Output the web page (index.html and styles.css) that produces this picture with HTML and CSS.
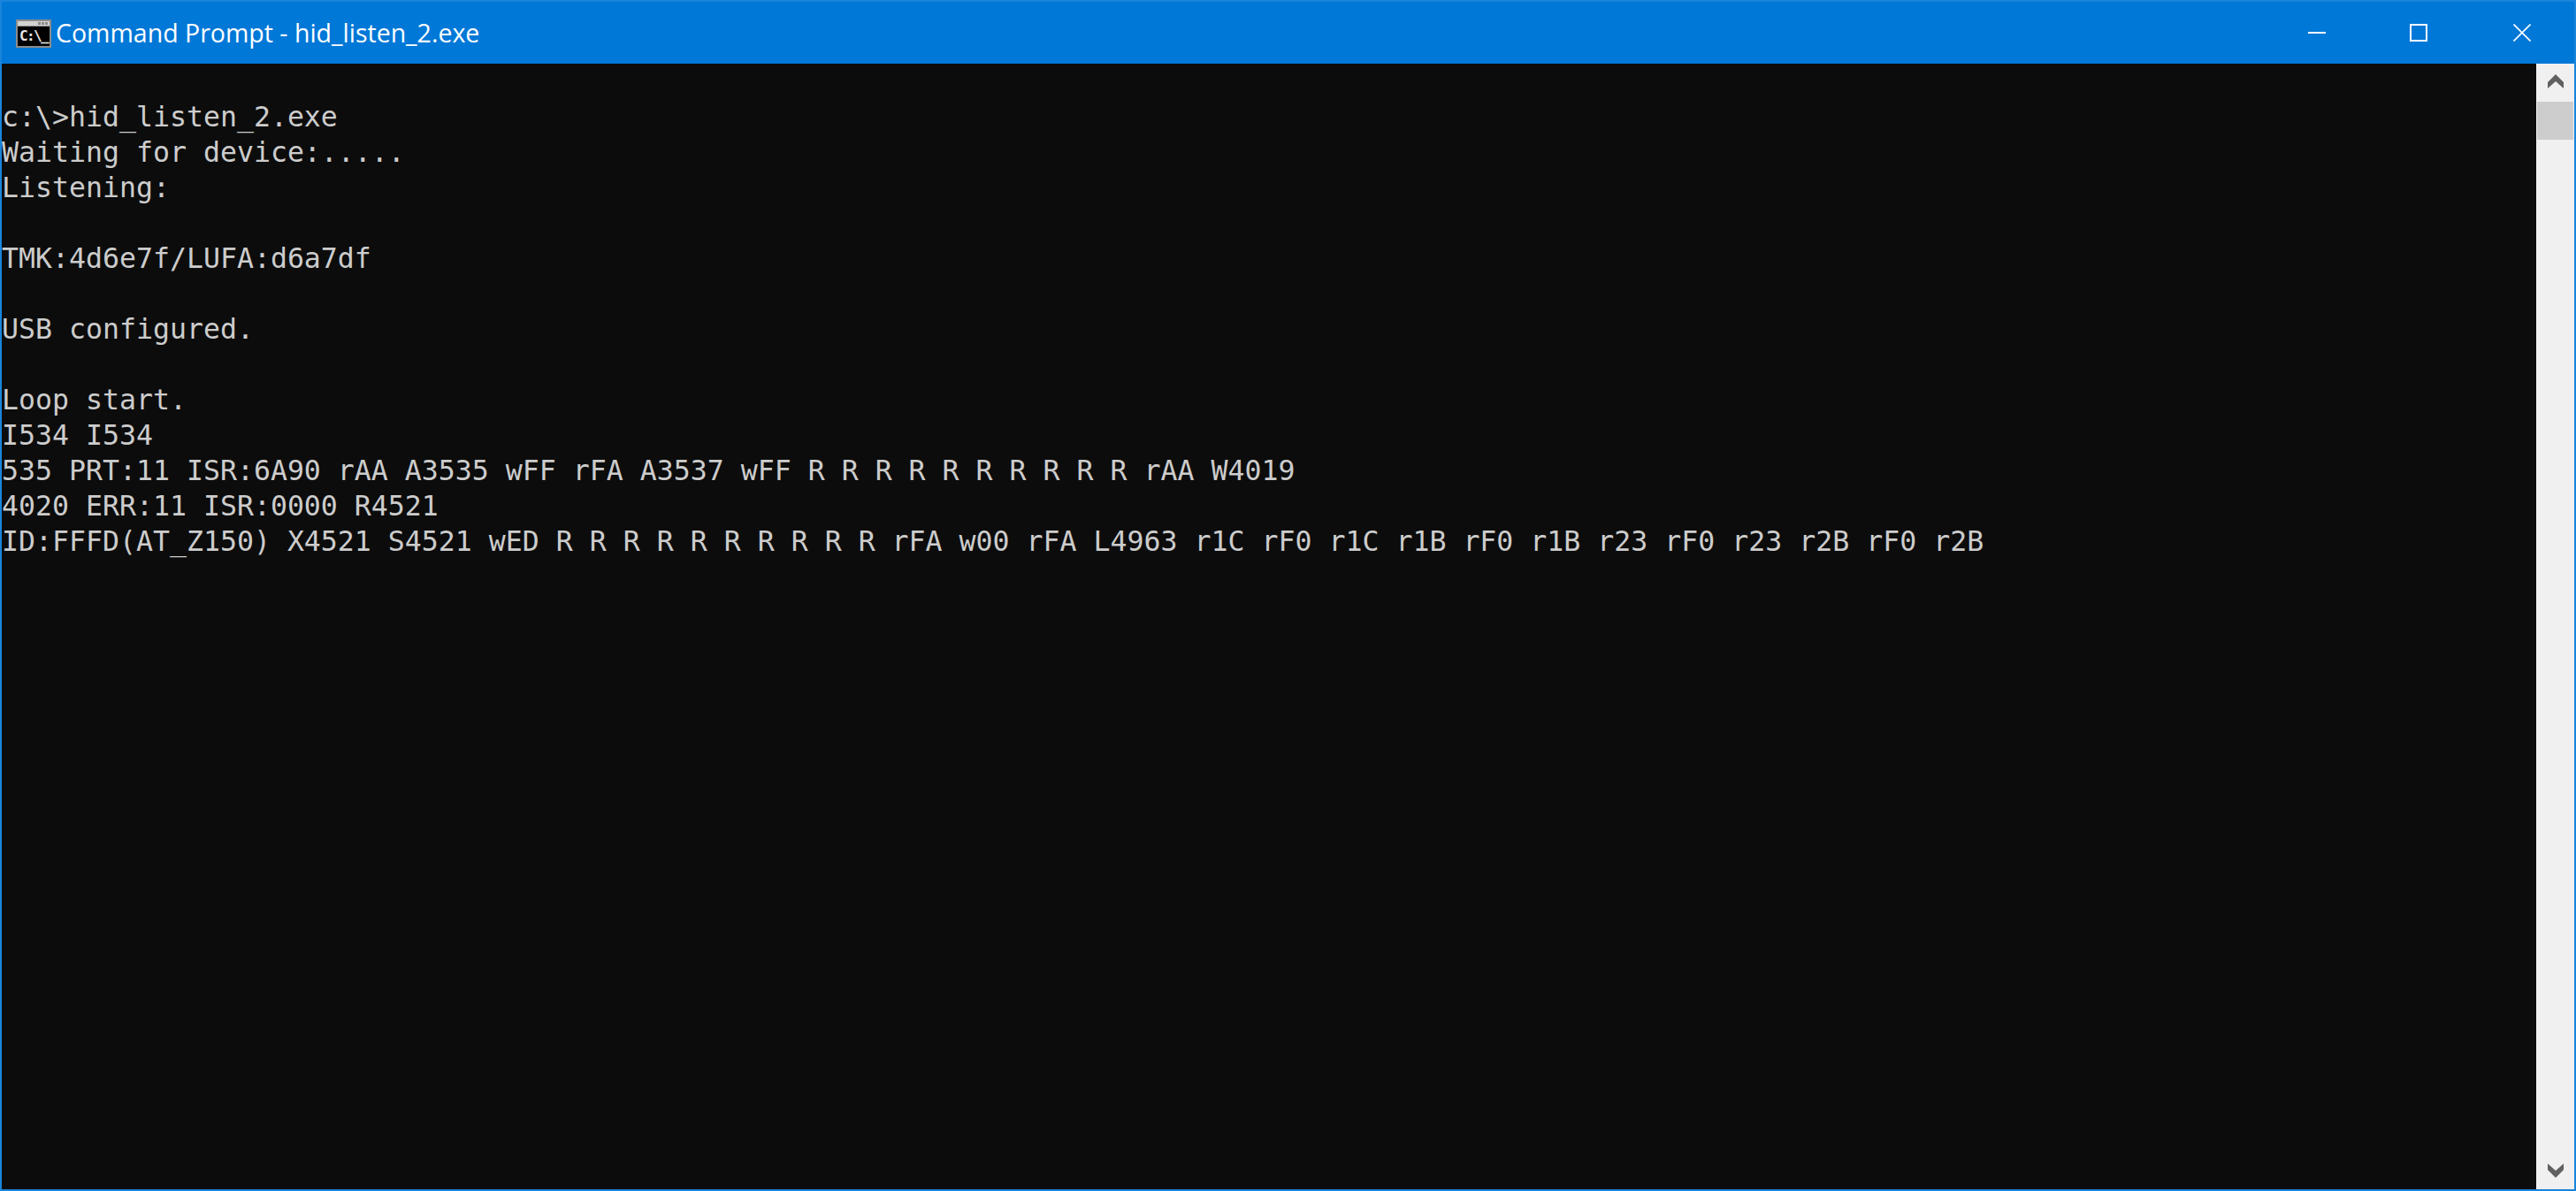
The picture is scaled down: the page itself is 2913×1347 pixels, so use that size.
FILE: index.html
```html
<!DOCTYPE html>
<html lang="en">
<head>
<meta charset="utf-8">
<title>Command Prompt - hid_listen_2.exe</title>
<link rel="stylesheet" href="styles.css">
</head>
<body>
<div class="window">
  <header class="titlebar">
    <svg class="app-icon" width="40" height="32" viewBox="0 0 40 32" aria-hidden="true">
      <rect width="40" height="32" fill="#8c8c8c"/>
      <rect x="2" y="2" width="36" height="5" fill="#d2d2d2"/>
      <rect x="25" y="3" width="3" height="3" fill="#8c8c8c"/>
      <rect x="29" y="3" width="3" height="3" fill="#8c8c8c"/>
      <rect x="33" y="3" width="3" height="3" fill="#8c8c8c"/>
      <rect x="2" y="8" width="36" height="22" fill="#000"/>
      <text class="app-icon-text" x="4" y="24">C:\_</text>
    </svg>
    <h1 class="title">Command Prompt - hid_listen_2.exe</h1>
    <div class="controls">
      <div class="control control-min">
        <svg width="20" height="20" viewBox="0 0 20 20" aria-hidden="true"><rect x="0" y="9" width="20" height="2" fill="#fff"/></svg>
      </div>
      <div class="control control-max">
        <svg width="20" height="20" viewBox="0 0 20 20" aria-hidden="true"><rect x="1" y="1" width="18" height="18" fill="none" stroke="#fff" stroke-width="2"/></svg>
      </div>
      <div class="control control-close">
        <svg width="20" height="20" viewBox="0 0 20 20" aria-hidden="true"><path d="M0.5 0.5L19.5 19.5M19.5 0.5L0.5 19.5" fill="none" stroke="#fff" stroke-width="1.6"/></svg>
      </div>
    </div>
  </header>
  <main class="body">
    <pre class="console">

c:\&gt;hid_listen_2.exe
Waiting for device:.....
Listening:

TMK:4d6e7f/LUFA:d6a7df

USB configured.

Loop start.
I534 I534
535 PRT:11 ISR:6A90 rAA A3535 wFF rFA A3537 wFF R R R R R R R R R R rAA W4019
4020 ERR:11 ISR:0000 R4521
ID:FFFD(AT_Z150) X4521 S4521 wED R R R R R R R R R R rFA w00 rFA L4963 r1C rF0 r1C r1B rF0 r1B r23 rF0 r23 r2B rF0 r2B</pre>
    <aside class="scrollbar">
      <div class="arrow arrow-up">
        <svg width="18" height="16" viewBox="0 0 18 16" aria-hidden="true"><path d="M9 0L18 9V16L9 8L0 16V9Z" fill="#606060"/></svg>
      </div>
      <div class="thumb"></div>
      <div class="track"></div>
      <div class="arrow">
        <svg width="18" height="16" viewBox="0 0 18 16" aria-hidden="true"><path d="M0 0L9 8L18 0V7L9 16L0 7Z" fill="#606060"/></svg>
      </div>
    </aside>
  </main>
</div>
</body>
</html>
```
FILE: styles.css
```css
* { box-sizing: border-box; }
html, body { margin: 0; height: 100%; }
body { background: #1a85db; overflow: hidden; }
.window {
  width: 2913px;
  height: 1347px;
  display: flex;
  flex-direction: column;
  border: 2px solid #1a85db;
}
.titlebar {
  height: 70px;
  flex: none;
  display: flex;
  align-items: center;
  padding-left: 16px;
  background: #0078d7;
  color: #fff;
}
.app-icon { flex: none; margin-top: 2px; }
.app-icon-text {
  font-family: "DejaVu Sans Mono", monospace;
  font-weight: 700;
  font-size: 16px;
  letter-spacing: -1.6px;
  fill: #e8e8e8;
}
.title {
  margin: 0 0 0 5px;
  font-family: "Open Sans", sans-serif;
  font-weight: 400;
  font-size: 28.5px;
  line-height: 70px;
}
.controls { margin-left: auto; display: flex; }
.control {
  height: 70px;
  display: flex;
  align-items: center;
  justify-content: center;
}
.control-min { width: 114px; }
.control-max { width: 116px; }
.control-close { width: 118px; }
.body { flex: 1; display: flex; min-height: 0; }
.console {
  flex: 1;
  margin: 0;
  padding: 0;
  background: #0c0c0c;
  color: #cccccc;
  font-family: "DejaVu Sans Mono", monospace;
  font-size: 31.55px;
  line-height: 40px;
  overflow: hidden;
  white-space: pre;
}
.scrollbar {
  width: 43px;
  flex: none;
  display: flex;
  flex-direction: column;
  background: #f0f0f0;
  padding: 0 1px;
}
.arrow {
  height: 43px;
  flex: none;
  display: flex;
  align-items: center;
  justify-content: center;
}
.arrow-up { padding-bottom: 3px; }
.thumb { height: 43px; flex: none; background: #cdcdcd; }
.track { flex: 1; }
```
